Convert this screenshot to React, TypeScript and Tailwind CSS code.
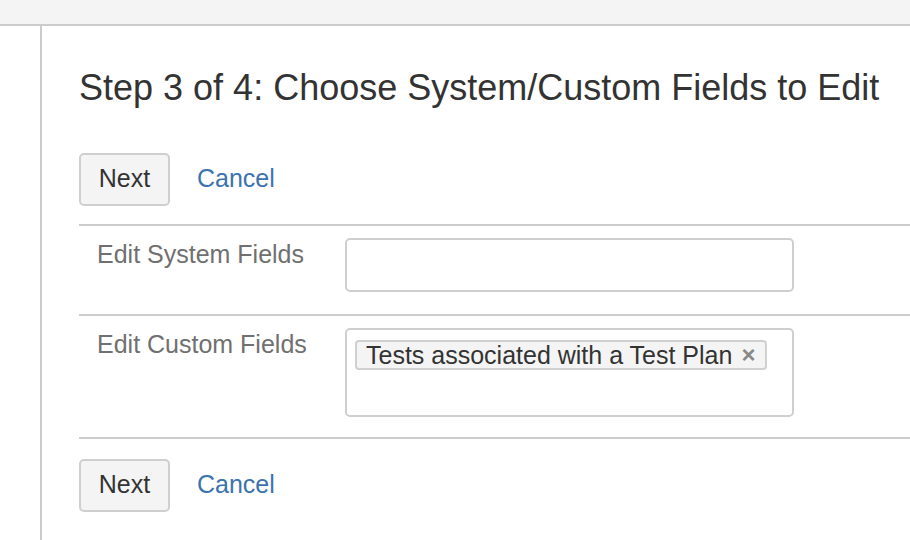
const font = { fontFamily: "'Liberation Sans', Arial, sans-serif" };

const Buttons = () => (
  <div className="flex items-center gap-[27px]">
    <button className="w-[91px] h-[53px] rounded-[5px] border-2 border-[#cfcfcf] bg-[#f4f4f4] text-[25px] leading-[28px] pb-[3px] text-[#333]">
      Next
    </button>
    <a href="#" className="text-[25px] leading-[28px] pb-[3px] text-[#3b73af]">
      Cancel
    </a>
  </div>
);

const App = () => {
  return (
    <div className="w-[910px] h-[540px] bg-white overflow-hidden text-[#333]" style={font}>
      <div className="h-[26px] bg-[#f4f4f4] border-b-2 border-[#cccccc]" />
      <div className="flex h-[514px]">
        <div className="w-[40px] shrink-0" />
        <div className="flex-1 border-l-2 border-[#cccccc] pl-[37px]">
          <h1 className="mt-[41px] text-[36px] leading-[42px] text-[#333] whitespace-nowrap">
            Step 3 of 4: Choose System/Custom Fields to Edit
          </h1>
          <div className="mt-[44px]">
            <Buttons />
          </div>

          <div className="mt-[18px] border-t-2 border-[#cccccc]">
            {/* system fields */}
            <div className="flex pt-[12px] pb-[22px] border-b-2 border-[#cccccc]">
              <div className="w-[266px] pl-[18px] pt-[1px] text-[25px] leading-[30px] text-[#707070]">
                Edit System Fields
              </div>
              <div className="w-[449px] h-[54px] rounded-[5px] border-2 border-[#cfcfcf]" />
            </div>

            {/* custom fields */}
            <div className="flex pt-[12px] pb-[20px] border-b-2 border-[#cccccc]">
              <div className="w-[266px] pl-[18px] pt-[1px] text-[25px] leading-[30px] text-[#707070]">
                Edit Custom Fields
              </div>
              <div className="w-[449px] h-[89px] rounded-[5px] border-2 border-[#cfcfcf] pl-[8px] pt-[10px]">
                <span className="inline-flex items-center h-[30px] rounded-[4px] border-2 border-[#d0d0d0] bg-[#f4f4f4] pl-[9px] pr-[10px] text-[25px] leading-[28px] text-[#333]">
                  Tests associated with a Test Plan
                  <span className="ml-[9px] text-[24px] leading-[24px] text-[#888] font-bold">×</span>
                </span>
              </div>
            </div>
          </div>

          <div className="mt-[20px]">
            <Buttons />
          </div>
        </div>
      </div>
    </div>
  );
};

export default App;
